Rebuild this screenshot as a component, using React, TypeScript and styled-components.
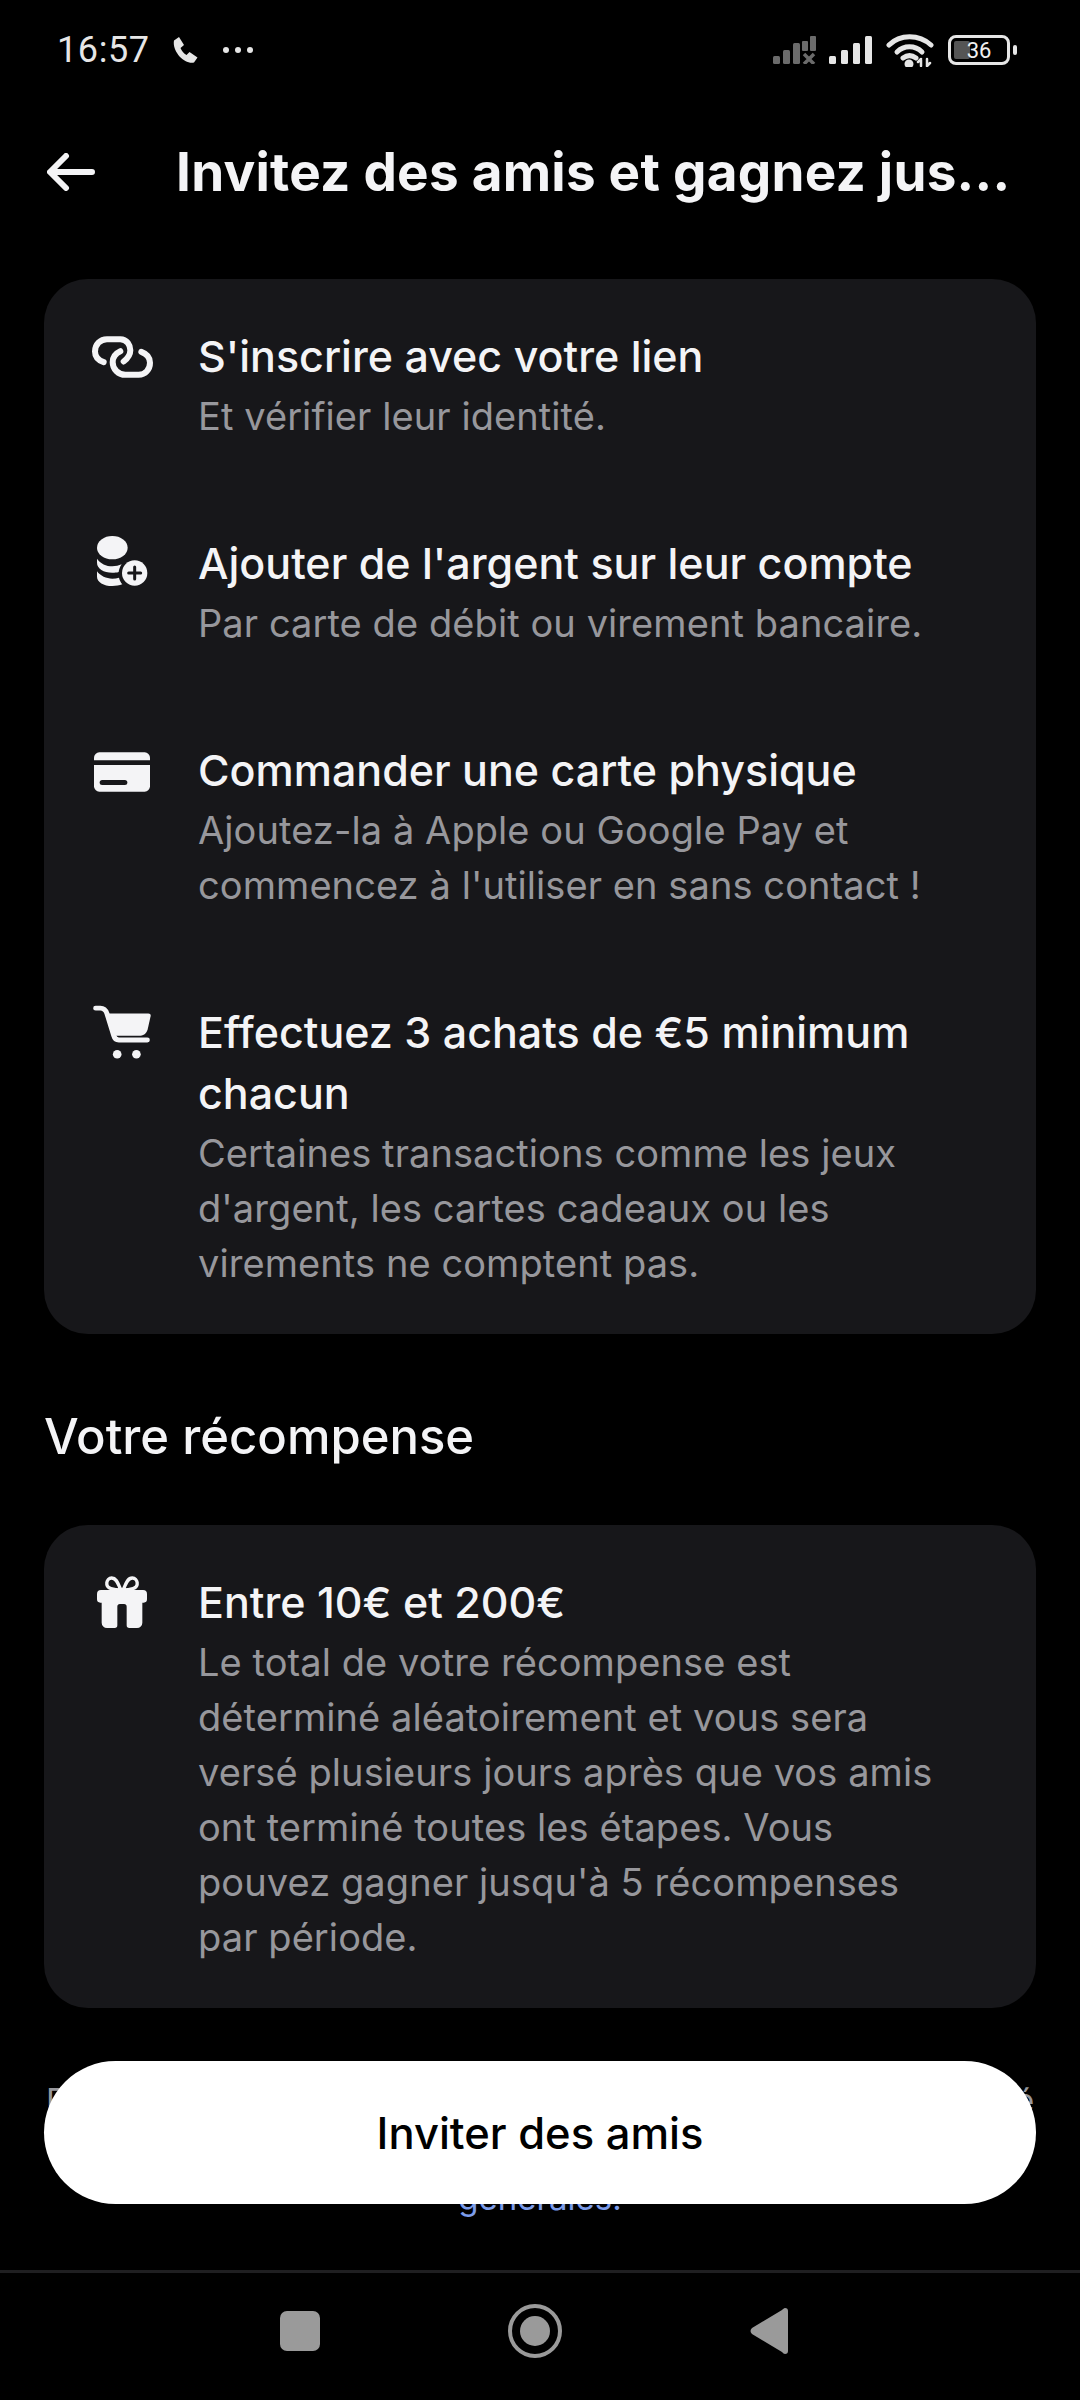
import React from 'react';
import styled, { createGlobalStyle } from 'styled-components';

const cardBg = '#17171a';

const GlobalStyle = createGlobalStyle`
  html, body {
    margin: 0;
    padding: 0;
    background: #000;
  }

  * {
    box-sizing: border-box;
  }
`;

const Screen = styled.div`
  position: relative;
  display: flex;
  flex-direction: column;
  width: 1080px;
  height: 2400px;
  overflow: hidden;
  background: #000;
  color: #f4f4f6;
  font-family: Inter, "Noto Sans", sans-serif;
`;

const StatusBar = styled.div`
  display: flex;
  align-items: center;
  justify-content: space-between;
  height: 100px;
  padding: 0 70px 0 57px;
  flex: none;
`;

const StatusGroup = styled.div`
  display: flex;
  align-items: center;
`;

const Clock = styled.span`
  font-family: Roboto, sans-serif;
  font-size: 36px;
  color: #e6e6e6;
  letter-spacing: 0.6px;
  margin-right: 22px;
`;

const SignalGap = styled.span`
  width: 12px;
`;

const Battery = styled.div`
  position: relative;
  display: flex;
  align-items: center;
  justify-content: center;
  width: 62px;
  height: 30px;
  margin-left: 14px;
  border: 3px solid #e6e6e6;
  border-radius: 8px;
  font-family: Roboto, sans-serif;
  font-size: 22px;
  color: #f0f0f0;

  &::before {
    content: '';
    position: absolute;
    left: 3px;
    top: 3px;
    bottom: 3px;
    width: 16px;
    border-radius: 2px;
    background: #555;
  }

  &::after {
    content: '';
    position: absolute;
    right: -10px;
    top: 7px;
    width: 4px;
    height: 10px;
    border-radius: 2px;
    background: #e6e6e6;
  }

  span {
    position: relative;
  }
`;

const Header = styled.header`
  display: flex;
  align-items: center;
  height: 148px;
  padding: 0 44px 5px 47px;
  flex: none;
`;

const Title = styled.h1`
  margin: 0 0 0 81px;
  font-size: 53px;
  font-weight: 700;
  line-height: 60px;
  letter-spacing: 0.25px;
  color: #f4f4f6;
  white-space: nowrap;
`;

const Content = styled.main`
  flex: 1;
  min-height: 0;
  padding: 31px 44px 0;
  overflow: hidden;
  background: #000;
`;

const Card = styled.section`
  display: flex;
  flex-direction: column;
  gap: 89px;
  padding: 47px 44px 43px;
  border-radius: 44px;
  background: ${cardBg};
`;

const Row = styled.div`
  display: flex;
  align-items: flex-start;
`;

const IconSlot = styled.div<{ $top: number }>`
  display: flex;
  justify-content: center;
  width: 68px;
  margin-right: 42px;
  padding-top: ${(p) => p.$top}px;
  flex: none;
`;

const RowText = styled.div`
  min-width: 0;
`;

const RowTitle = styled.div`
  font-size: 43px;
  font-weight: 450;
  line-height: 61px;
  color: #f4f4f6;
`;

const RowSub = styled.div`
  margin-top: 2px;
  font-size: 38px;
  line-height: 55px;
  letter-spacing: 0.08px;
  color: #97979c;
`;

const SectionTitle = styled.h2`
  margin: 71px 0 56px;
  font-size: 49px;
  font-weight: 450;
  line-height: 64px;
  color: #f4f4f6;
`;

const FinePrint = styled.p`
  margin: 68px 0 0;
  font-size: 33px;
  line-height: 49px;
  text-align: center;
  color: #97979c;
  white-space: nowrap;

  a {
    color: #7c9cea;
  }
`;

const InviteButton = styled.button`
  position: absolute;
  left: 44px;
  top: 2061px;
  width: 992px;
  height: 143px;
  border: 0;
  border-radius: 72px;
  background: #fff;
  color: #000;
  font-family: inherit;
  font-size: 43.5px;
  font-weight: 450;
`;

const NavBar = styled.nav`
  display: flex;
  align-items: center;
  justify-content: center;
  gap: 188px;
  height: 130px;
  padding: 0 12px 12px 0;
  border-top: 3px solid #1f1f21;
  background: #000;
  flex: none;
`;

const Phone = () => (
  <svg width="28" height="28" viewBox="0 0 28 28" fill="#e6e6e6">
    <path d="M2 4.5 7 1l5 8-3.5 3c1 2.6 3.4 5.6 6 7l3-3 8 5.500-3.500 5C12 28.500 0 15 2 4.500Z" />
  </svg>
);

const DotsIcon = styled.svg`
  margin-left: 22px;
`;

const Dots = () => (
  <DotsIcon width="32" height="8" viewBox="0 0 32 8" fill="#e6e6e6">
    <circle cx="4" cy="4" r="3" />
    <circle cx="16" cy="4" r="3" />
    <circle cx="28" cy="4" r="3" />
  </DotsIcon>
);

const Signal = ({ muted }: { muted?: boolean }) => (
  <svg width="44" height="28" viewBox="0 0 44 28" fill={muted ? '#6b6b6b' : '#e6e6e6'}>
    <rect x="0" y="20" width="7" height="8" rx="1.500" />
    {muted ? (
      <>
        <rect x="10" y="14" width="7" height="14" rx="1.500" />
        <rect x="20" y="7" width="7" height="21" rx="1.500" />
        <rect x="29" y="5" width="6" height="10" rx="1" />
        <rect x="37" y="0" width="6" height="15" rx="1" />
        <path d="m31 18 10 10m0-10L31 28" stroke="#6b6b6b" strokeWidth="3.500" fill="none" />
      </>
    ) : (
      <>
        <rect x="12" y="14" width="7" height="14" rx="1.500" />
        <rect x="24" y="7" width="7" height="21" rx="1.500" />
        <rect x="36" y="0" width="7" height="28" rx="1.500" />
      </>
    )}
  </svg>
);

const WifiIcon = styled.svg`
  margin-left: 13px;
`;

const Wifi = () => (
  <WifiIcon width="48" height="34" viewBox="0 0 48 34" fill="none" stroke="#e6e6e6" strokeWidth="5" strokeLinecap="round">
    <path d="M3 12C14 1 33 1 45 12" />
    <path d="M11 19c7-7 18-7 25 0" />
    <path d="M17 25c4-3 9-3 13 0" />
    <circle cx="23" cy="31" r="2" fill="#e6e6e6" />
    <path d="M35 33v-6m-3 2 3-3M41 33v-7m3 4-3 3" strokeWidth="2.500" />
  </WifiIcon>
);

const BackArrow = () => (
  <svg width="48" height="38" viewBox="0 0 48 38" fill="none" stroke="#f4f4f6" strokeWidth="6" strokeLinecap="round" strokeLinejoin="round">
    <path d="M45 19H4M19 3 3 19l16 16" />
  </svg>
);

const LinkIcon = () => (
  <svg width="61" height="42" viewBox="0 0 183 125" fill="none" stroke="#f4f4f6" strokeWidth="18" strokeLinecap="round">
    <path d="M35 78C18 72 9 60 9 46 9 25 25 9 45 9h40c20 0 30 19 30 33 0 13-10 26-20 34" />
    <path d="M85 45C70 52 62 65 62 78c0 22 18 38 38 38h40c20 0 34-16 34-36 0-18-12-28-26-33" />
  </svg>
);

const CoinsIcon = () => (
  <svg width="51" height="50" viewBox="0 0 153 150" fill="#f4f4f6">
    <ellipse cx="46" cy="35" rx="46" ry="35" />
    <path d="M0 68c10 15 28 23 46 23 10 0 20-2 28-6-5 7-8 15-9 23-6 2-12 2-19 2-26 0-46-12-46-30V68Z" />
    <path d="M0 106c10 14 28 22 46 22 7 0 14-1 20-3 2 8 5 14 10 20-9 3-19 5-30 5-26 0-46-12-46-28v-16Z" />
    <circle cx="113" cy="111" r="38" />
    <path d="M113 93v36M95 111h36" stroke={cardBg} strokeWidth="9" strokeLinecap="round" fill="none" />
  </svg>
);

const CardIcon = () => (
  <svg width="56" height="40" viewBox="0 0 168 118" fill="#f4f4f6">
    <path d="M16 0h136a16 16 0 0 1 16 16v8H0v-8A16 16 0 0 1 16 0Z" />
    <path d="M0 38h168v64a16 16 0 0 1-16 16H16A16 16 0 0 1 0 102V38Z" />
    <rect x="17" y="83" width="83" height="15" rx="7.500" fill={cardBg} />
  </svg>
);

const CartIcon = () => (
  <svg width="58" height="54" viewBox="0 0 175 162" fill="#f4f4f6">
    <path d="M8 9h14c10 0 17 7 20 16l21 68c2 8 8 12 15 12h86" fill="none" stroke="#f4f4f6" strokeWidth="15" strokeLinecap="round" />
    <path d="M37 25h130c5 0 8 3 7 8l-9 40c-3 11-10 19-22 19H63Z" />
    <circle cx="73" cy="148" r="13" />
    <circle cx="131" cy="148" r="13" />
  </svg>
);

const GiftIcon = () => (
  <svg width="50" height="52" viewBox="0 0 150 156" fill="#f4f4f6">
    <path d="M72 42C64 30 62 6 44 6 28 6 22 32 42 38c10 3 20 4 30 4Zm6 0c8-12 10-36 28-36 16 0 22 26 2 32-10 3-20 4-30 4Z" fill="none" stroke="#f4f4f6" strokeWidth="10" />
    <path d="M12 42h126a12 12 0 0 1 12 12v16a10 10 0 0 1-10 10h-4v60a16 16 0 0 1-16 16H97a8 8 0 0 1-8-8V92a8 8 0 0 0-8-8h-12a8 8 0 0 0-8 8v56a8 8 0 0 1-8 8H30a16 16 0 0 1-16-16V80h-4A10 10 0 0 1 0 70V54a12 12 0 0 1 12-12Z" />
  </svg>
);

const SquareKey = () => (
  <svg width="40" height="40" viewBox="0 0 40 40" fill="#9a9a9a">
    <rect width="40" height="40" rx="7" />
  </svg>
);

const HomeKey = () => (
  <svg width="54" height="54" viewBox="0 0 54 54" fill="#9a9a9a">
    <circle cx="27" cy="27" r="25" fill="none" stroke="#9a9a9a" strokeWidth="4" />
    <circle cx="27" cy="27" r="15" />
  </svg>
);

const BackKey = () => (
  <svg width="38" height="46" viewBox="0 0 38 46" fill="#9a9a9a">
    <path d="M35 0c2 0 3 1 3 3v40c0 2-1 3-3 3-1 0-2-1-3-2L2 26c-2-2-2-4 0-6L32 2c1-1 2-2 3-2Z" />
  </svg>
);

const steps = [
  {
    icon: <LinkIcon />,
    top: 10,
    title: "S'inscrire avec votre lien",
    sub: ['Et vérifier leur identité.'],
  },
  {
    icon: <CoinsIcon />,
    top: 3,
    title: "Ajouter de l'argent sur leur compte",
    sub: ['Par carte de débit ou virement bancaire.'],
  },
  {
    icon: <CardIcon />,
    top: 12,
    title: 'Commander une carte physique',
    sub: ['Ajoutez-la à Apple ou Google Pay et', "commencez à l'utiliser en sans contact !"],
  },
  {
    icon: <CartIcon />,
    top: 3,
    title: ['Effectuez 3 achats de €5 minimum', 'chacun'],
    sub: ["Certaines transactions comme les jeux", "d'argent, les cartes cadeaux ou les", 'virements ne comptent pas.'],
  },
];

const reward = [
  'Le total de votre récompense est',
  'déterminé aléatoirement et vous sera',
  'versé plusieurs jours après que vos amis',
  'ont terminé toutes les étapes. Vous',
  "pouvez gagner jusqu'à 5 récompenses",
  'par période.',
];

const lines = (items: string | string[]) =>
  (Array.isArray(items) ? items : [items]).map((line) => <div key={line}>{line}</div>);

export default function App() {
  return (
    <Screen>
      <GlobalStyle />
      <StatusBar>
        <StatusGroup>
          <Clock>16:57</Clock>
          <Phone />
          <Dots />
        </StatusGroup>
        <StatusGroup>
          <Signal muted />
          <SignalGap />
          <Signal />
          <Wifi />
          <Battery><span>36</span></Battery>
        </StatusGroup>
      </StatusBar>
      <Header>
        <BackArrow />
        <Title>Invitez des amis et gagnez jus...</Title>
      </Header>
      <Content>
        <Card>
          {steps.map((step) => (
            <Row key={step.sub[0]}>
              <IconSlot $top={step.top}>{step.icon}</IconSlot>
              <RowText>
                <RowTitle>{lines(step.title)}</RowTitle>
                <RowSub>{lines(step.sub)}</RowSub>
              </RowText>
            </Row>
          ))}
        </Card>
        <SectionTitle>Votre récompense</SectionTitle>
        <Card>
          <Row>
            <IconSlot $top={4}><GiftIcon /></IconSlot>
            <RowText>
              <RowTitle>Entre 10€ et 200€</RowTitle>
              <RowSub>{lines(reward)}</RowSub>
            </RowText>
          </Row>
        </Card>
        <FinePrint>
          Des conditions s'appliquent. Cette offre est soumise à éligibilité
          <br />
          et limitée dans le temps. Voir nos <a>conditions</a>
          <br />
          <a>générales.</a>
        </FinePrint>
      </Content>
      <InviteButton>Inviter des amis</InviteButton>
      <NavBar>
        <SquareKey />
        <HomeKey />
        <BackKey />
      </NavBar>
    </Screen>
  );
}
